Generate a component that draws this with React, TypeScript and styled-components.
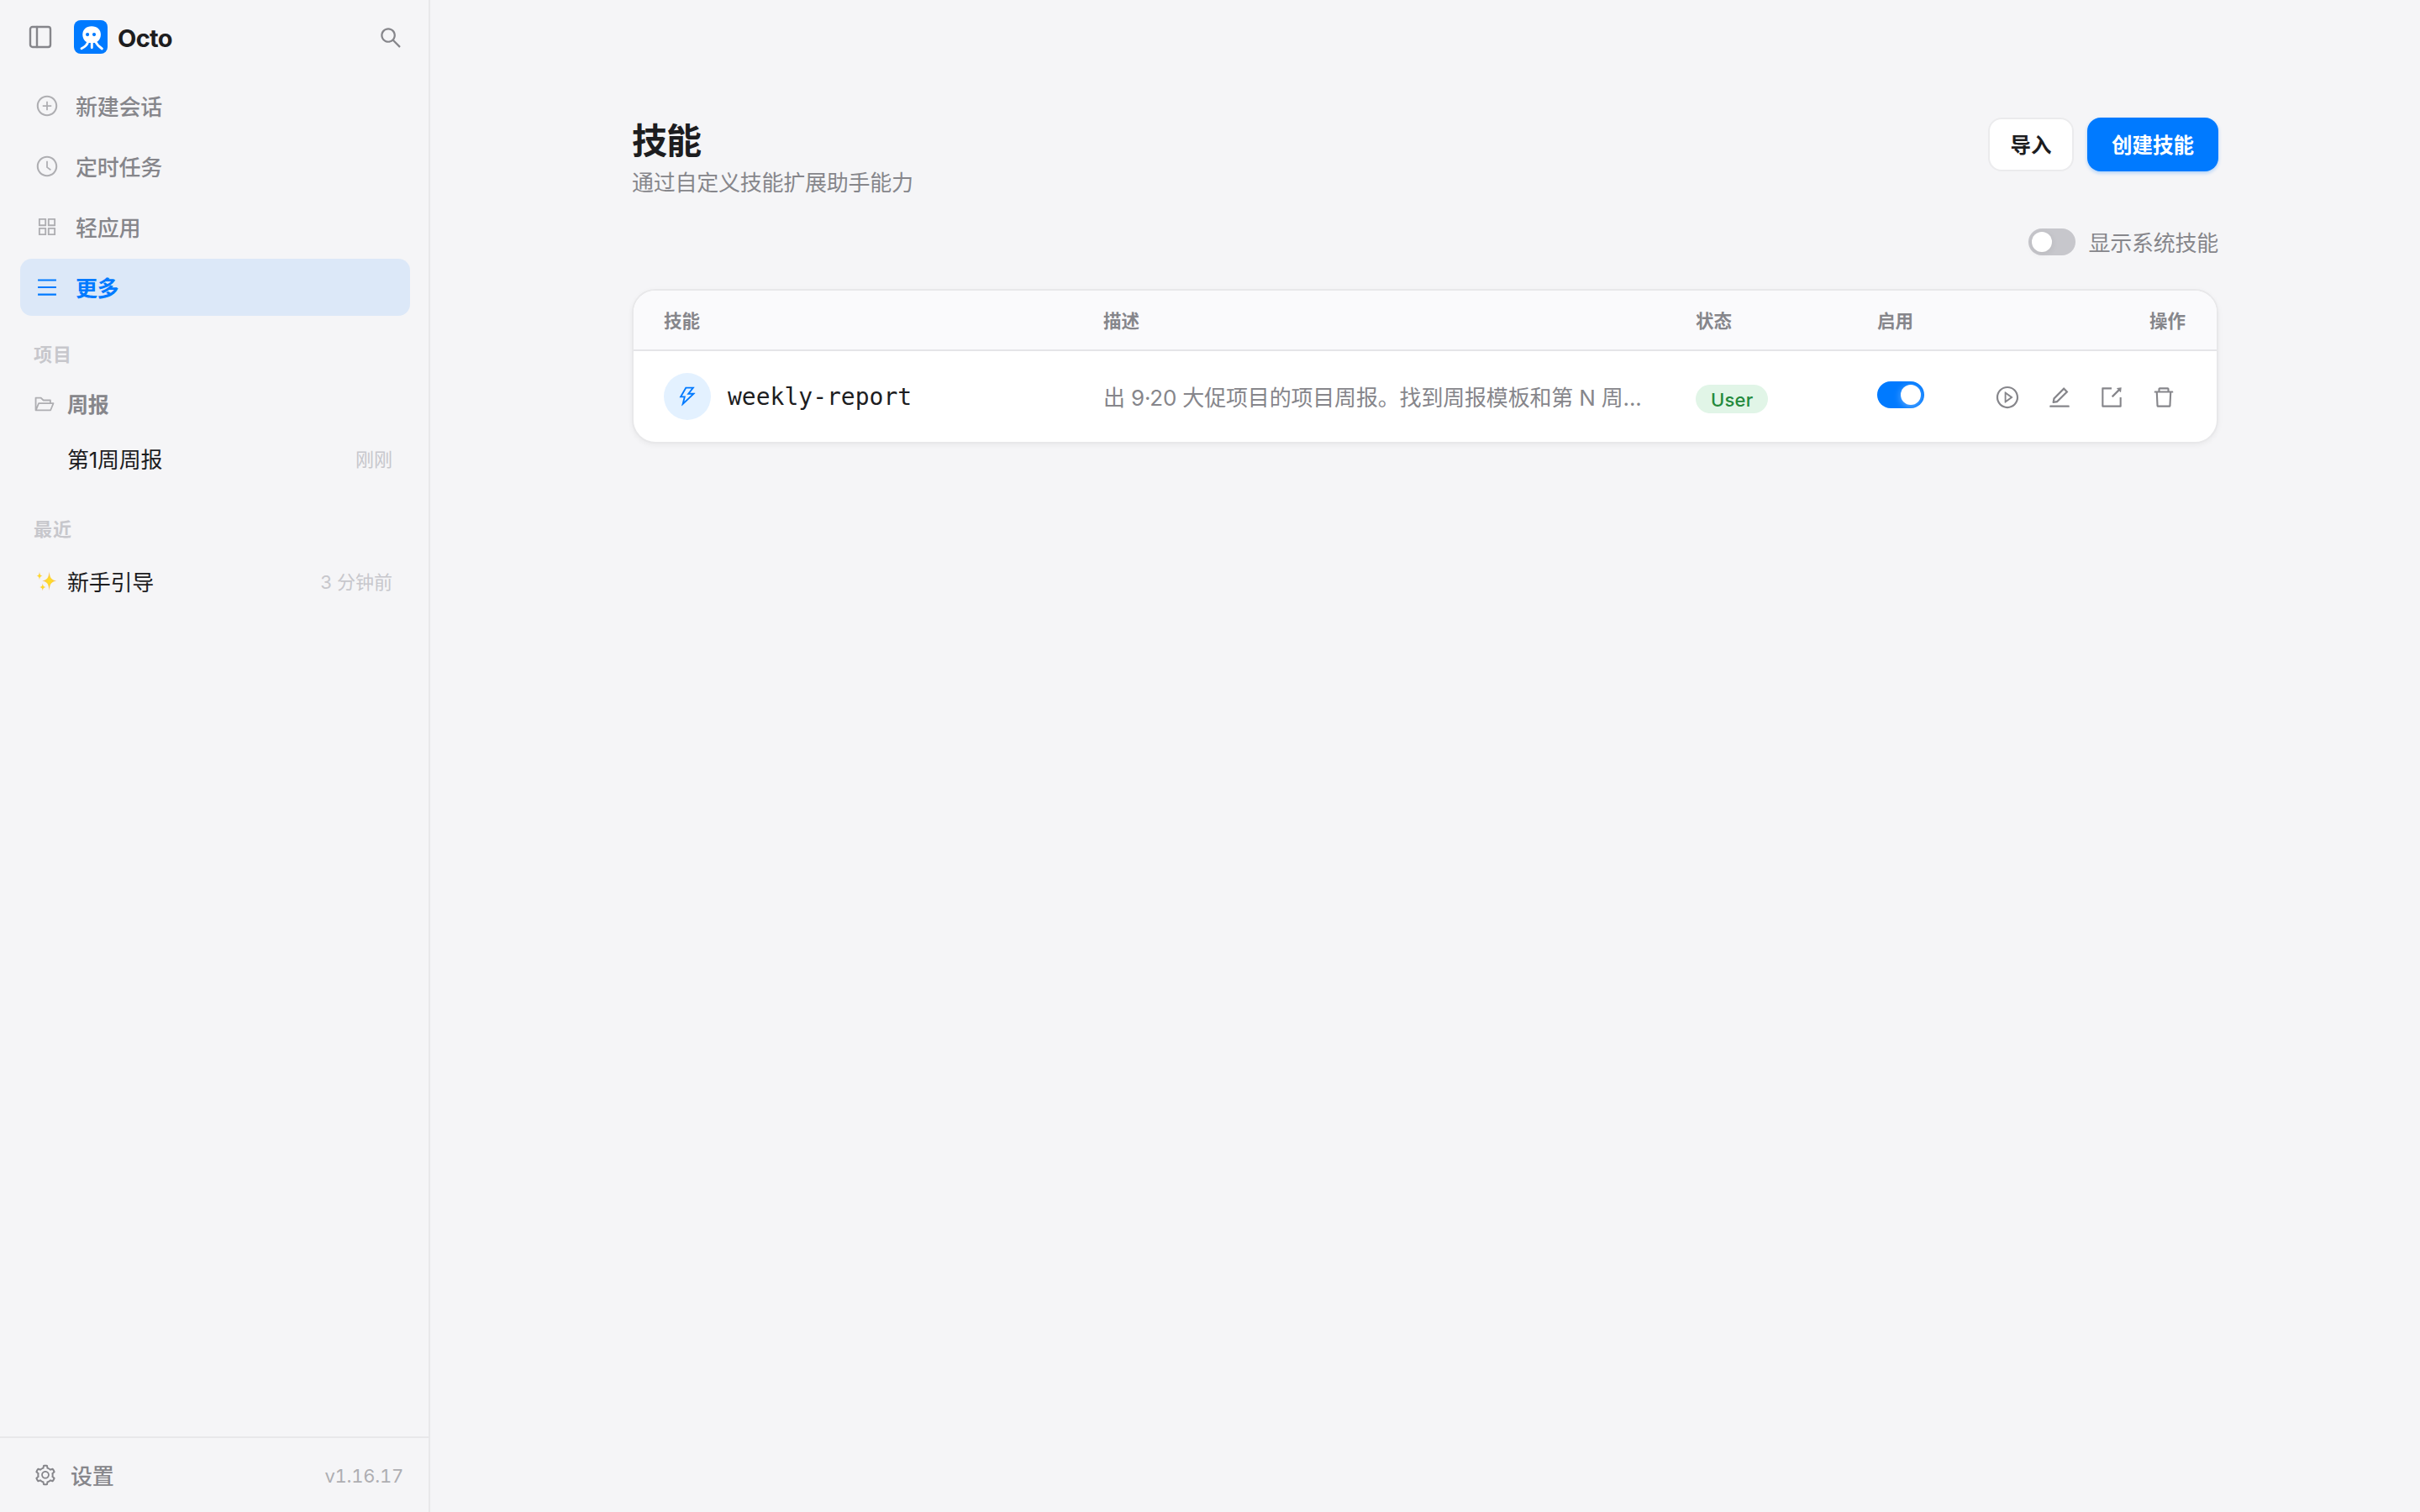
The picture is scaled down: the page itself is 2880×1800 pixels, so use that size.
import React from "react";
import styled, { createGlobalStyle } from "styled-components";
import { PanelLeft } from "lucide-react";
import {
  AiOutlineAppstore,
  AiOutlineClockCircle,
  AiOutlineDelete,
  AiOutlineEdit,
  AiOutlineFolderOpen,
  AiOutlineMenu,
  AiOutlinePlayCircle,
  AiOutlinePlusCircle,
  AiOutlineSearch,
  AiOutlineSetting,
  AiOutlineThunderbolt,
} from "react-icons/ai";

const GlobalStyle = createGlobalStyle`
  * {
    box-sizing: border-box;
  }
  body {
    margin: 0;
    background-color: #f5f5f7;
    color: #1d1d1f;
    font-family: Inter, "Noto Sans CJK SC", sans-serif;
    font-size: 26px;
    letter-spacing: -0.25px;
    -webkit-font-smoothing: antialiased;
  }
  svg {
    display: block;
    flex-shrink: 0;
  }
`;

const Layout = styled.div`
  display: flex;
  height: 100vh;
`;

/* ---------- sidebar ---------- */

const Sidebar = styled.aside`
  display: flex;
  flex-direction: column;
  width: 512px;
  flex-shrink: 0;
  border-right: 2px solid #e8e8ea;
`;
const Brand = styled.div`
  display: flex;
  align-items: center;
  height: 88px;
  padding: 0 30px 0 32px;
  color: #86868b;
`;
const Logo = styled.svg`
  margin-left: 24px;
`;
const BrandName = styled.span`
  flex: 1;
  margin-left: 12px;
  padding-top: 3px;
  color: #1d1d1f;
  font-size: 29px;
  font-weight: 650;
  line-height: 40px;
  letter-spacing: -0.7px;
`;
const SearchButton = styled.span`
  padding-top: 1px;
`;
const Nav = styled.nav`
  display: flex;
  flex-direction: column;
  gap: 4px;
  padding: 4px 22px 0 24px;
`;
const NavItem = styled.div<{ $active?: boolean }>`
  display: flex;
  align-items: center;
  gap: 20px;
  height: 68px;
  padding: 0 18px;
  border-radius: 14px;
  background-color: ${(p) => (p.$active ? "#dce8f8" : "transparent")};
  color: ${(p) => (p.$active ? "#007aff" : "#86868b")};
  font-weight: ${(p) => (p.$active ? 700 : 500)};
  letter-spacing: ${(p) => (p.$active ? -0.6 : -0.25)}px;
  & svg {
    color: ${(p) => (p.$active ? "#007aff" : "#aeaeb2")};
  }
  & span {
    padding-bottom: 2px;
  }
`;
const Groups = styled.div`
  flex: 1;
`;
const GroupTitle = styled.div`
  padding-left: 40px;
  color: #c7c7cc;
  font-size: 22px;
  font-weight: 600;
  line-height: 32px;
  letter-spacing: 1px;
`;
const ProjectGroup = styled.section`
  padding-top: 30px;
`;
const RecentGroup = styled.section`
  padding-top: 35px;
`;
const Folder = styled.div`
  display: flex;
  align-items: center;
  gap: 14px;
  height: 48px;
  margin-top: 18px;
  padding-left: 40px;
  color: #86868b;
  font-size: 25px;
  font-weight: 600;
  & svg {
    margin-top: 2px;
    color: #aeaeb2;
  }
`;
const Session = styled.div`
  display: flex;
  align-items: center;
  height: 68px;
  margin: 7px 0 0 24px;
  padding: 0 43px 0 16px;
`;
const RecentSession = styled(Session)`
  margin-top: 11px;
`;
const SessionIcon = styled.span`
  display: flex;
  width: 40px;
  padding: 2px 0 0 3px;
`;
const SessionName = styled.span`
  flex: 1;
  font-weight: 400;
`;
const SessionTime = styled.span`
  color: #c7c7cc;
  font-size: 22px;
  letter-spacing: 0;
`;
const Footer = styled.div`
  display: flex;
  align-items: center;
  height: 90px;
  padding: 0 30px 0 40px;
  border-top: 2px solid #e8e8ea;
  color: #86868b;
`;
const FooterLabel = styled.span`
  flex: 1;
  margin-left: 16px;
  padding-bottom: 2px;
  font-weight: 500;
`;
const Version = styled.span`
  padding-top: 2px;
  color: #aeaeb2;
  font-size: 22px;
  font-variant-numeric: tabular-nums;
`;

/* ---------- content ---------- */

const Main = styled.main`
  flex: 1;
  padding: 140px 240px;
`;
const PageHeader = styled.header`
  display: flex;
  justify-content: space-between;
  align-items: flex-start;
  height: 112px;
`;
const Title = styled.h1`
  margin: 0;
  padding-top: 1px;
  font-size: 42px;
  font-weight: 700;
  line-height: 54px;
  letter-spacing: -0.9px;
`;
const Subtitle = styled.p`
  margin: 5px 0 0;
  color: #86868b;
  line-height: 36px;
`;
const Buttons = styled.div`
  display: flex;
  gap: 16px;
`;
const Button = styled.button<{ $primary?: boolean }>`
  height: 64px;
  width: ${(p) => (p.$primary ? 156 : 102)}px;
  padding: 0 0 1px;
  border: ${(p) => (p.$primary ? "0" : "2px solid #ebebed")};
  border-radius: 16px;
  background-color: ${(p) => (p.$primary ? "#007aff" : "#fff")};
  box-shadow: ${(p) => (p.$primary ? "0 2px 4px rgba(0, 122, 255, 0.3)" : "none")};
  color: ${(p) => (p.$primary ? "#fff" : "#1d1d1f")};
  font: 600 24.5px Inter, "Noto Sans CJK SC", sans-serif;
`;
const Filter = styled.label`
  display: flex;
  justify-content: flex-end;
  align-items: center;
  gap: 15px;
  height: 72px;
  color: #86868b;
`;
const FilterText = styled.span`
  padding-bottom: 2px;
`;
const Switch = styled.span<{ $on?: boolean }>`
  display: flex;
  justify-content: ${(p) => (p.$on ? "flex-end" : "flex-start")};
  width: 56px;
  height: 32px;
  padding: 4px;
  border-radius: 16px;
  background-color: ${(p) => (p.$on ? "#007aff" : "#c7c7cc")};
  &::after {
    content: "";
    width: 24px;
    height: 24px;
    border-radius: 50%;
    background-color: #fff;
    box-shadow: 0 2px 8px ${(p) => (p.$on ? "rgba(255, 255, 255, 0.4)" : "rgba(0, 0, 0, 0.08)")};
  }
`;
const Table = styled.div`
  margin-top: 20px;
  border: 2px solid #e8e8ea;
  border-radius: 28px;
  background-color: #fff;
  box-shadow: 0 2px 6px rgba(0, 0, 0, 0.05);
  overflow: hidden;
`;
const Row = styled.div`
  display: grid;
  grid-template-columns: 523px 705px 216px 1fr auto;
  align-items: center;
  height: 108px;
  padding: 0 36px;
`;
const HeadRow = styled(Row)`
  height: 72px;
  padding: 0 37px 1px 36px;
  border-bottom: 2px solid #e5e5e8;
  background-color: #fafafc;
  color: #86868b;
  font-size: 21.5px;
  font-weight: 600;
  letter-spacing: 0;
`;
const Skill = styled.div`
  display: flex;
  align-items: center;
  gap: 20px;
  font-family: "DejaVu Sans Mono", monospace;
  font-size: 28px;
  letter-spacing: 0;
`;
const SkillIcon = styled.span`
  display: grid;
  place-items: center;
  width: 56px;
  height: 56px;
  border-radius: 50%;
  background-color: #e3f1ff;
  color: #007aff;
`;
const Description = styled.div`
  width: 642px;
  padding-bottom: 2px;
  color: #86868b;
  letter-spacing: -0.18px;
  white-space: nowrap;
`;
const Badge = styled.span`
  display: inline-block;
  height: 34px;
  margin-top: 6px;
  padding: 0 18px;
  border-radius: 17px;
  background-color: #e1f5e7;
  color: #248a3d;
  font-size: 22px;
  font-weight: 500;
  line-height: 36px;
  letter-spacing: 0.2px;
`;
const EnabledCell = styled.div`
  padding-bottom: 4px;
`;
const Actions = styled.div`
  display: flex;
  gap: 32px;
  padding: 2px 12px 0 0;
  color: #86868b;
`;

const OctoLogo = () => (
  <Logo width="40" height="40" viewBox="0 0 40 40">
    <rect width="40" height="40" rx="8" fill="#007aff" />
    <path
      d="M21 7.3c6.6 0 10.9 3.9 10.9 9.9 0 5.2-3.7 9.9-9.5 9.9h-3c-5.6 0-9.1-4.6-9.1-9.9C10.3 11.2 14.5 7.3 21 7.3z"
      fill="#fff"
    />
    <path
      d="M16.8 25.5c-.9 4.2-3.7 6.3-7.8 8.2M21.3 25v7.8M25.6 25.5c2 4.2 4.6 6.3 7.8 8.5"
      fill="none"
      stroke="#fff"
      strokeWidth="2.9"
      strokeLinecap="round"
    />
    <circle cx="16.1" cy="17.1" r="2.1" fill="#007aff" />
    <circle cx="24" cy="17.1" r="2.1" fill="#007aff" />
  </Logo>
);

const Sparkles = () => (
  <svg width="26" height="26" viewBox="0 0 26 26">
    <defs>
      <radialGradient id="spark">
        <stop offset="0" stopColor="#ffe11f" />
        <stop offset="0.5" stopColor="#fdd03a" />
        <stop offset="1" stopColor="#f6b273" />
      </radialGradient>
    </defs>
    <g fill="url(#spark)">
      <path d="M15.6 1.5c.8 7.2 2 9.7 8.6 11-6.6 1.3-7.8 3.8-8.6 11.5-.8-7.7-2-10.2-8.4-11.5 6.4-1.3 7.6-3.8 8.4-11z" />
      <path d="M4 1.5c.4 3.6 1 4.5 3.6 5-2.6.6-3.2 1.5-3.6 5-.4-3.5-1-4.4-3.3-5C3 6 3.6 5.1 4 1.5z" />
      <path d="M7.8 15.5c.4 3 1.1 3.900 3.700 4.500-2.600.6-3.300 1.400-3.700 4.300-.4-2.900-1.100-3.700-3.600-4.300 2.500-.6 3.200-1.500 3.600-4.500z" />
    </g>
  </svg>
);

const ExportIcon = () => (
  <svg width="30" height="30" viewBox="0 0 1024 1024" fill="currentColor">
    <path d="M880 912H144c-17.7 0-32-14.3-32-32V144c0-17.7 14.3-32 32-32h360c4.4 0 8 3.6 8 8v56c0 4.4-3.6 8-8 8H184v656h656V520c0-4.4 3.6-8 8-8h56c4.4 0 8 3.6 8 8v360c0 17.7-14.3 32-32 32zM770.9 199.100l-52.200-52.200a8 8 0 0 1 4.700-13.600l179.400-21c5.100-.6 9.500 3.700 8.900 8.900l-21 179.400c-.8 6.600-8.900 9.400-13.600 4.700l-52.400-52.400-256.200 256.200a8 8 0 0 1-11.300 0l-42.400-42.400a8 8 0 0 1 0-11.300l256.100-256.300z" />
  </svg>
);

const navItems = [
  { icon: <AiOutlinePlusCircle size={28} />, label: "新建会话" },
  { icon: <AiOutlineClockCircle size={28} />, label: "定时任务" },
  { icon: <AiOutlineAppstore size={28} />, label: "轻应用" },
  { icon: <AiOutlineMenu size={28} />, label: "更多", active: true },
];

const App = () => {
  return (
    <Layout>
      <GlobalStyle />
      <Sidebar>
        <Brand>
          <PanelLeft size={32} strokeWidth={1.8} />
          <OctoLogo />
          <BrandName>Octo</BrandName>
          <SearchButton>
            <AiOutlineSearch size={30} />
          </SearchButton>
        </Brand>
        <Nav>
          {navItems.map((item) => (
            <NavItem key={item.label} $active={item.active}>
              {item.icon}
              <span>{item.label}</span>
            </NavItem>
          ))}
        </Nav>
        <Groups>
          <ProjectGroup>
            <GroupTitle>项目</GroupTitle>
            <Folder>
              <AiOutlineFolderOpen size={26} />
              <span>周报</span>
            </Folder>
            <Session>
              <SessionIcon />
              <SessionName>第1周周报</SessionName>
              <SessionTime>刚刚</SessionTime>
            </Session>
          </ProjectGroup>
          <RecentGroup>
            <GroupTitle>最近</GroupTitle>
            <RecentSession>
              <SessionIcon>
                <Sparkles />
              </SessionIcon>
              <SessionName>新手引导</SessionName>
              <SessionTime>3 分钟前</SessionTime>
            </RecentSession>
          </RecentGroup>
        </Groups>
        <Footer>
          <AiOutlineSetting size={28} />
          <FooterLabel>设置</FooterLabel>
          <Version>v1.16.17</Version>
        </Footer>
      </Sidebar>
      <Main>
        <PageHeader>
          <div>
            <Title>技能</Title>
            <Subtitle>通过自定义技能扩展助手能力</Subtitle>
          </div>
          <Buttons>
            <Button>导入</Button>
            <Button $primary>创建技能</Button>
          </Buttons>
        </PageHeader>
        <Filter>
          <Switch />
          <FilterText>显示系统技能</FilterText>
        </Filter>
        <Table>
          <HeadRow>
            <span>技能</span>
            <span>描述</span>
            <span>状态</span>
            <span>启用</span>
            <span>操作</span>
          </HeadRow>
          <Row>
            <Skill>
              <SkillIcon>
                <AiOutlineThunderbolt size={28} />
              </SkillIcon>
              <span>weekly-report</span>
            </Skill>
            <Description>出 9·20 大促项目的项目周报。找到周报模板和第 N 周...</Description>
            <div>
              <Badge>User</Badge>
            </div>
            <EnabledCell>
              <Switch $on />
            </EnabledCell>
            <Actions>
              <AiOutlinePlayCircle size={30} />
              <AiOutlineEdit size={30} />
              <ExportIcon />
              <AiOutlineDelete size={30} />
            </Actions>
          </Row>
        </Table>
      </Main>
    </Layout>
  );
};

export default App;
